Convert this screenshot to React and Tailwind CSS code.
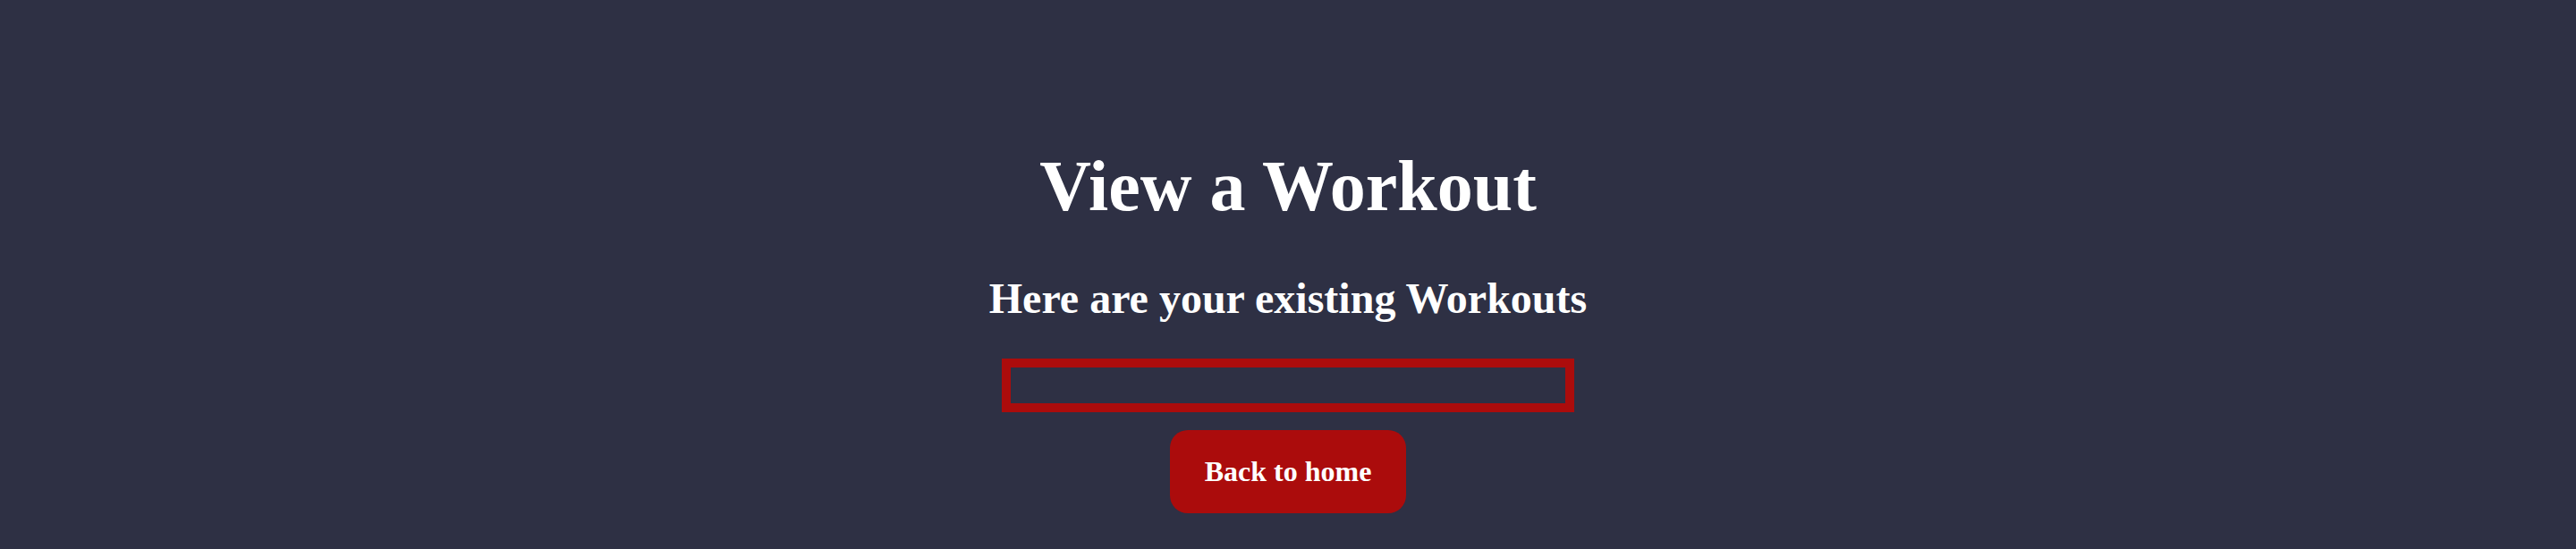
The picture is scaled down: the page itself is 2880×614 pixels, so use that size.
export default function App() {
  const workouts = [];

  return (
    <div className="min-h-[614px] w-full bg-[#2e3044] flex flex-col items-center pt-[162px] font-['Liberation_Serif','Times_New_Roman',serif] text-white">
      <h1 className="text-[80px] leading-[92px] font-bold">View a Workout</h1>
      <h2 className="mt-[52px] text-[48px] leading-[56px] font-bold">Here are your existing Workouts</h2>
      <div className="mt-[39px] w-[640px] h-[60px] border-[10px] border-[#ab0c0c]">
        {workouts.map((w) => (
          <p key={w.id}>{w.name}</p>
        ))}
      </div>
      <button className="mt-[20px] px-[39px] py-[28px] rounded-[20px] bg-[#ab0c0c] text-[32px] leading-[37px] font-bold text-white">
        Back to home
      </button>
    </div>
  );
}
